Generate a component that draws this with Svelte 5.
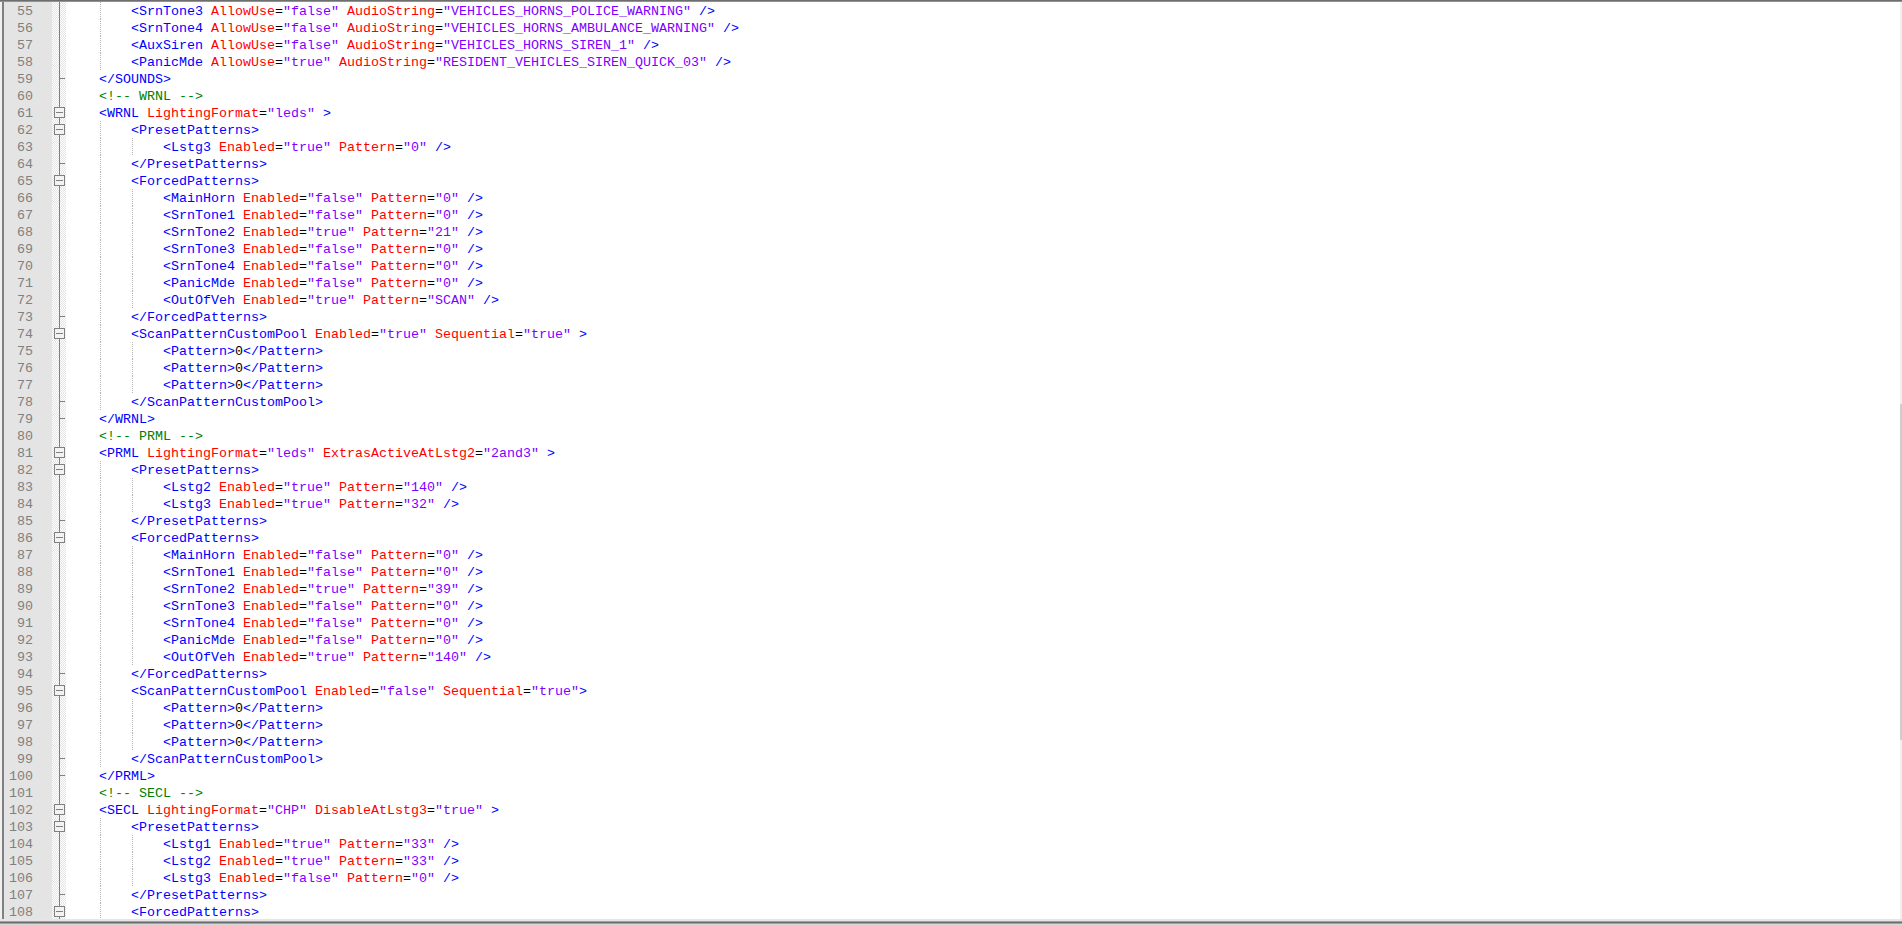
<script>
  // Notepad++ style XML view, first visible line is 55
  const FIRST_LINE = 55;

  // [indent level, source text]
  const source = [
    [2, '<SrnTone3 AllowUse="false" AudioString="VEHICLES_HORNS_POLICE_WARNING" />'],
    [2, '<SrnTone4 AllowUse="false" AudioString="VEHICLES_HORNS_AMBULANCE_WARNING" />'],
    [2, '<AuxSiren AllowUse="false" AudioString="VEHICLES_HORNS_SIREN_1" />'],
    [2, '<PanicMde AllowUse="true" AudioString="RESIDENT_VEHICLES_SIREN_QUICK_03" />'],
    [1, '</SOUNDS>'],
    [1, '<!-- WRNL -->'],
    [1, '<WRNL LightingFormat="leds" >'],
    [2, '<PresetPatterns>'],
    [3, '<Lstg3 Enabled="true" Pattern="0" />'],
    [2, '</PresetPatterns>'],
    [2, '<ForcedPatterns>'],
    [3, '<MainHorn Enabled="false" Pattern="0" />'],
    [3, '<SrnTone1 Enabled="false" Pattern="0" />'],
    [3, '<SrnTone2 Enabled="true" Pattern="21" />'],
    [3, '<SrnTone3 Enabled="false" Pattern="0" />'],
    [3, '<SrnTone4 Enabled="false" Pattern="0" />'],
    [3, '<PanicMde Enabled="false" Pattern="0" />'],
    [3, '<OutOfVeh Enabled="true" Pattern="SCAN" />'],
    [2, '</ForcedPatterns>'],
    [2, '<ScanPatternCustomPool Enabled="true" Sequential="true" >'],
    [3, '<Pattern>0</Pattern>'],
    [3, '<Pattern>0</Pattern>'],
    [3, '<Pattern>0</Pattern>'],
    [2, '</ScanPatternCustomPool>'],
    [1, '</WRNL>'],
    [1, '<!-- PRML -->'],
    [1, '<PRML LightingFormat="leds" ExtrasActiveAtLstg2="2and3" >'],
    [2, '<PresetPatterns>'],
    [3, '<Lstg2 Enabled="true" Pattern="140" />'],
    [3, '<Lstg3 Enabled="true" Pattern="32" />'],
    [2, '</PresetPatterns>'],
    [2, '<ForcedPatterns>'],
    [3, '<MainHorn Enabled="false" Pattern="0" />'],
    [3, '<SrnTone1 Enabled="false" Pattern="0" />'],
    [3, '<SrnTone2 Enabled="true" Pattern="39" />'],
    [3, '<SrnTone3 Enabled="false" Pattern="0" />'],
    [3, '<SrnTone4 Enabled="false" Pattern="0" />'],
    [3, '<PanicMde Enabled="false" Pattern="0" />'],
    [3, '<OutOfVeh Enabled="true" Pattern="140" />'],
    [2, '</ForcedPatterns>'],
    [2, '<ScanPatternCustomPool Enabled="false" Sequential="true">'],
    [3, '<Pattern>0</Pattern>'],
    [3, '<Pattern>0</Pattern>'],
    [3, '<Pattern>0</Pattern>'],
    [2, '</ScanPatternCustomPool>'],
    [1, '</PRML>'],
    [1, '<!-- SECL -->'],
    [1, '<SECL LightingFormat="CHP" DisableAtLstg3="true" >'],
    [2, '<PresetPatterns>'],
    [3, '<Lstg1 Enabled="true" Pattern="33" />'],
    [3, '<Lstg2 Enabled="true" Pattern="33" />'],
    [3, '<Lstg3 Enabled="false" Pattern="0" />'],
    [2, '</PresetPatterns>'],
    [2, '<ForcedPatterns>']
  ];

  // split one line into coloured tokens
  function tokenize(text) {
    if (text.startsWith('<!--')) return [{ cls: 'comment', text }];
    const tokens = [];
    const re = /(<\/?\w+)|(\w+(?==))|(=)|("[^"]*")|(\/?>)|(\s+)|([^<>="\s]+)/g;
    let m;
    while ((m = re.exec(text))) {
      let cls = 'plain';
      if (m[1] || m[5]) cls = 'tag';
      else if (m[2]) cls = 'attr';
      else if (m[4]) cls = 'value';
      tokens.push({ cls, text: m[0] });
    }
    return tokens;
  }

  // box on opening tags, tick on closing tags
  function foldKind(text) {
    if (text.startsWith('</')) return 'end';
    if (text.startsWith('<!--') || text.includes('/>') || text.includes('</')) return '';
    return 'open';
  }

  const lines = source.map(([level, text], i) => ({
    number: FIRST_LINE + i,
    level,
    fold: foldKind(text),
    tokens: tokenize(text)
  }));
</script>

<div class="window">
  <div class="top-edge"></div>
  <div class="editor">
    <div class="lines">
      {#each lines as line}
        <div class="line">
          <div class="number">{line.number}</div>
          <div class="fold">
            {#if line.fold === 'open'}
              <span class="box"></span>
            {:else if line.fold === 'end'}
              <span class="tick"></span>
            {/if}
          </div>
          <div class="code">
            {#each { length: line.level } as _, n}
              <span class="indent" class:guide={n > 0}></span>
            {/each}
            <span class="source">{#each line.tokens as token}<span class={token.cls}>{token.text}</span>{/each}</span>
          </div>
        </div>
      {/each}
    </div>
    <div class="scrollbar"><div class="thumb"></div></div>
  </div>
  <div class="bottom-edge"></div>
</div>

<style>
  :global(body) {
    margin: 0;
    background: #fff;
    overflow: hidden;
  }

  .window {
    width: 1902px;
    height: 925px;
    display: flex;
    flex-direction: column;
    overflow: hidden;
  }

  .top-edge {
    height: 2px;
    flex: none;
    background: linear-gradient(#6e6e6e 50%, #929292 50%);
  }

  .editor {
    flex: 1;
    min-height: 0;
    display: flex;
    overflow: hidden;
  }

  .lines {
    flex: 1;
    min-width: 0;
    overflow: hidden;
    background: linear-gradient(90deg, #f0f0f0 2px, #808080 2px, #808080 4px, transparent 4px);
    padding-left: 4px;
  }

  /* line-height is taller than the row so the text sits 1px low, as in the editor */
  .line {
    display: flex;
    height: 17px;
    font-family: "Liberation Mono", monospace;
    font-size: 13.33px;
    line-height: 19px;
  }

  .number {
    width: 48px;
    flex: none;
    box-sizing: border-box;
    padding-right: 19px;
    text-align: right;
    color: #808080;
    background: #e4e4e4;
  }

  .fold {
    width: 14px;
    flex: none;
    box-sizing: border-box;
    padding-left: 2px;
    display: flex;
    align-items: center;
    background:
      linear-gradient(90deg, transparent 7px, #808080 7px, #808080 8px, transparent 8px),
      repeating-conic-gradient(#e4e4e4 0 25%, #fff 0 50%) 0 0 / 2px 2px;
  }

  .box {
    width: 11px;
    height: 11px;
    box-sizing: border-box;
    border: 1px solid #808080;
    background: linear-gradient(#808080, #808080) center / 7px 1px no-repeat #f3f3f3;
  }

  .tick {
    width: 6px;
    height: 1px;
    margin-left: 5px;
    background: #808080;
  }

  .code {
    flex: 1;
    display: flex;
    padding-left: 1px;
    white-space: pre;
    background: #fff;
  }

  .indent {
    width: 32px;
    flex: none;
  }

  .indent.guide {
    background: repeating-linear-gradient(#b0b0b0 0 1px, transparent 1px 2px) 1px 0 / 1px 100% no-repeat;
  }

  .tag { color: #0000ff; }
  .attr { color: #ff0000; }
  .value { color: #8000ff; }
  .comment { color: #008000; }
  .plain { color: #000; }

  .scrollbar {
    width: 2px;
    flex: none;
    background: #f0f0f0;
  }

  .thumb {
    height: 336px;
    margin-top: 402px;
    background: #cdcdcd;
  }

  .bottom-edge {
    height: 6px;
    flex: none;
    background: linear-gradient(#e6e6e6 2px, #a0a0a0 2px, #a0a0a0 3px, #6e6e6e 3px, #6e6e6e 4px, #a0a0a0 4px, #a0a0a0 5px, #d8d8d8 5px);
  }
</style>
